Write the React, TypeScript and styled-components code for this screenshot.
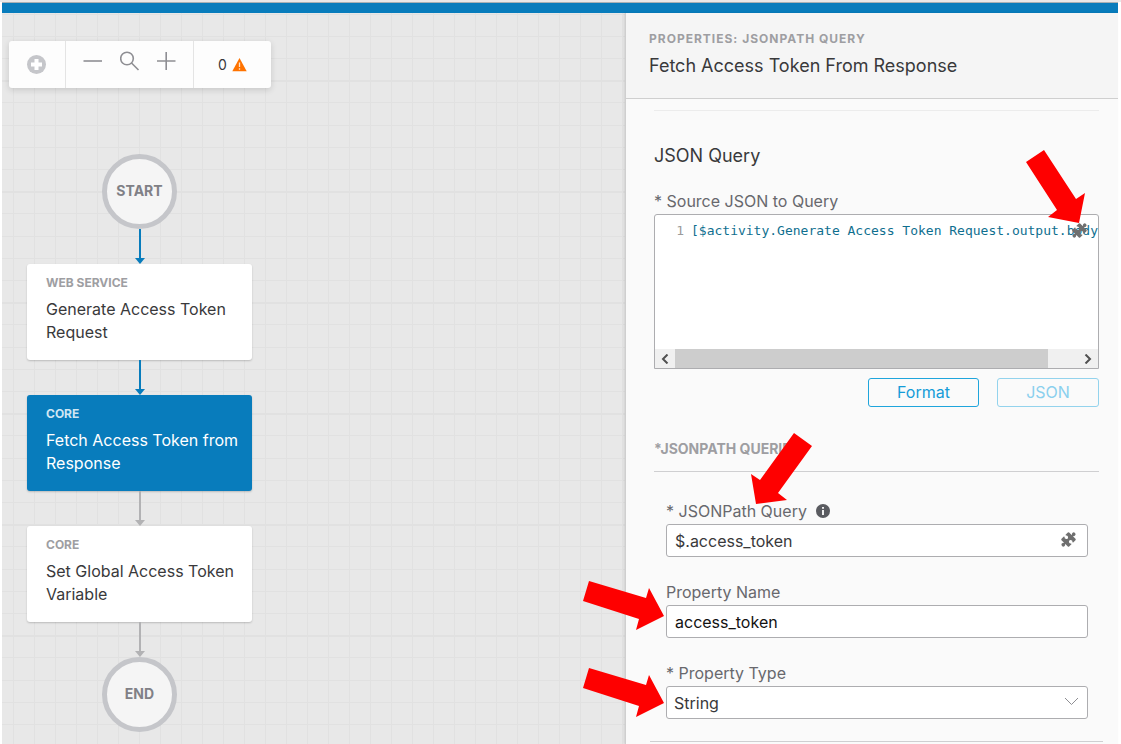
import React from "react";
import styled, { createGlobalStyle } from "styled-components";

const GlobalStyle = createGlobalStyle`
  *, *::before, *::after { box-sizing: border-box; }
  body {
    margin: 0;
    background: #fff;
    color: #39393b;
    font-family: Inter, "Liberation Sans", sans-serif;
    font-size: 15px;
  }
  button, input, select, textarea { font: inherit; }
`;

const Page = styled.div`
  display: flex;
  flex-direction: column;
  min-height: 100vh;
  border-top: 2px solid #e8e8e8;
`;

const Accent = styled.header`
  height: 11px;
  margin: 0 3px 0 2px;
  background: #087cbc;
  border-top: 1px solid #a8b0b4;
`;

const Workspace = styled.main`
  flex: 1;
  display: flex;
  margin: 0 3px 0 2px;
`;

const line = "#e1e1e1";

const Canvas = styled.section`
  flex: 1;
  min-width: 0;
  padding: 28px 7px 12px;
  background-color: #e8e8e8;
  background-image:
    linear-gradient(90deg, ${line} 1px, transparent 1px),
    linear-gradient(
      ${line} 1px, transparent 1px 22px,
      ${line} 22px 23px, transparent 23px 44px,
      ${line} 44px 46px, transparent 46px 66px,
      ${line} 66px 67px, transparent 67px 89px,
      ${line} 89px 90px, transparent 90px
    );
  background-size: 21px 111px;
  background-position: 11px 23px;
`;

const Toolbar = styled.div`
  display: inline-flex;
  height: 47px;
  background: #fdfdfd;
  border-radius: 3px;
  box-shadow: 0 2px 6px rgba(0, 0, 0, 0.14);
`;

const ToolGroup = styled.div<{ $width: number }>`
  display: flex;
  align-items: center;
  justify-content: center;
  gap: 17px;
  width: ${(p) => p.$width}px;
  & + & { border-left: 1px solid #e4e4e4; }
`;

const ToolButton = styled.button<{ $raised?: boolean }>`
  display: flex;
  padding: 0;
  margin-bottom: ${(p) => (p.$raised ? 8 : 0)}px;
  border: 0;
  background: none;
  color: #8e8e93;
`;

const Warnings = styled.button`
  display: flex;
  align-items: center;
  gap: 5px;
  padding: 0;
  border: 0;
  background: none;
  color: #39393b;
  font-size: 14px;
`;

const Flow = styled.div`
  display: flex;
  flex-direction: column;
  align-items: center;
  width: 225px;
  margin: 66px 0 0 18px;
`;

const Terminal = styled.div`
  display: flex;
  align-items: center;
  justify-content: center;
  width: 75px;
  height: 75px;
  padding-bottom: 3px;
  border: 5px solid #c5c6ca;
  border-radius: 50%;
  background: #f5f5f5;
  color: #808086;
  font-size: 14px;
  font-weight: 700;
`;

const Connector = styled.div<{ $active?: boolean }>`
  display: flex;
  flex-direction: column;
  align-items: center;
  height: 35px;
  color: ${(p) => (p.$active ? "#087cbc" : "#b2b2b4")};
  &::before {
    content: "";
    flex: 1;
    width: 2px;
    background: currentColor;
  }
  &::after {
    content: "";
    border: 5px solid transparent;
    border-top: 6px solid currentColor;
    border-bottom: 0;
  }
`;

const Activity = styled.article<{ $selected?: boolean }>`
  width: 100%;
  height: 96px;
  padding: 11px 10px 0 19px;
  border-radius: 3px;
  background: ${(p) => (p.$selected ? "#087cbc" : "#fff")};
  color: ${(p) => (p.$selected ? "#fff" : "#39393b")};
  box-shadow: 0 1px 2px rgba(0, 0, 0, 0.2);
`;

const ActivityKind = styled.div<{ $selected?: boolean }>`
  color: ${(p) => (p.$selected ? "#cfe6f3" : "#9e9ea2")};
  font-size: 12px;
  font-weight: 700;
  line-height: 16px;
`;

const ActivityName = styled.div`
  margin-top: 7px;
  font-size: 16px;
  line-height: 23px;
`;

const Panel = styled.aside`
  position: relative;
  width: 493px;
  border-left: 1px solid #cfcfcf;
  background: #fafafa;
  box-shadow: -1px 0 2px rgba(0, 0, 0, 0.1);
`;

const PanelHeader = styled.header`
  height: 86px;
  padding: 18px 23px 0;
  border-bottom: 1px solid #cfcfcf;
  background: #f5f5f5;
`;

const Eyebrow = styled.div`
  color: #9e9ea2;
  font-size: 12px;
  font-weight: 700;
  letter-spacing: 1px;
  line-height: 16px;
`;

const PanelTitle = styled.h1`
  margin: 7px 0 0;
  font-size: 18px;
  font-weight: 400;
  line-height: 24px;
`;

const PanelBody = styled.form`
  margin: 11px 19px 0 28px;
  border-top: 1px solid #ececec;
`;

const SectionTitle = styled.h2`
  margin: 33px 0 0;
  font-size: 18px;
  font-weight: 400;
  line-height: 24px;
`;

const Label = styled.label`
  color: #68686d;
  font-size: 16px;
  line-height: 24px;
`;

const EditorLabel = styled(Label)`
  display: block;
  margin-top: 21px;
`;

const Editor = styled.div`
  position: relative;
  margin-top: 1px;
  border: 1px solid #adadb0;
  border-radius: 3px 3px 0 0;
  background: #fff;
  overflow: hidden;
`;

const EditorLine = styled.div`
  display: flex;
  height: 134px;
  padding-top: 5px;
  font-family: "DejaVu Sans Mono", monospace;
  font-size: 13px;
  line-height: 22px;
`;

const Gutter = styled.span`
  width: 36px;
  padding-right: 7px;
  color: #9b9b9b;
  text-align: right;
`;

const CodeArea = styled.textarea`
  flex: 1;
  min-width: 0;
  padding: 0;
  border: 0;
  outline: 0;
  resize: none;
  overflow: hidden;
  white-space: pre;
  background: none;
  color: #0f6f8f;
`;

const ScrollTrack = styled.div`
  display: flex;
  align-items: center;
  height: 19px;
  background: #f0f0f0;
  color: #505050;
`;

const ScrollButton = styled.button`
  display: flex;
  align-items: center;
  justify-content: center;
  width: 20px;
  height: 19px;
  padding: 0;
  border: 0;
  background: none;
  color: inherit;
`;

const ScrollThumb = styled.div`
  width: 373px;
  height: 19px;
  margin-right: auto;
  background: #cdcdcd;
`;

const VariableButton = styled.button<{ $top: number; $right: number }>`
  position: absolute;
  top: ${(p) => p.$top}px;
  right: ${(p) => p.$right}px;
  display: flex;
  padding: 0;
  border: 0;
  background: none;
  color: #6f6f6f;
`;

const Actions = styled.div`
  display: flex;
  justify-content: flex-end;
  gap: 18px;
  margin-top: 9px;
`;

const ActionButton = styled.button<{ $width: number }>`
  width: ${(p) => p.$width}px;
  height: 29px;
  padding: 0 0 2px;
  border: 1px solid #1fa5dc;
  border-radius: 3px;
  background: none;
  color: #149cd8;
  font-size: 16px;
  &:disabled { border-color: #93d3ed; color: #8ad0ee; }
`;

const GroupTitle = styled.h3`
  margin: 30px 0 0;
  padding-bottom: 10px;
  border-bottom: 1px solid #cfcfd1;
  color: #9e9ea2;
  font-size: 14px;
  font-weight: 700;
  line-height: 24px;
`;

const Fields = styled.div`
  display: flex;
  flex-direction: column;
  gap: 23px;
  margin: 27px 11px 0 12px;
`;

const Field = styled.div`
  position: relative;
  display: flex;
  flex-direction: column;
`;

const LabelRow = styled.div`
  display: flex;
  align-items: center;
  gap: 9px;
  margin-bottom: 1px;
`;

const TextInput = styled.input<{ $strong?: boolean }>`
  height: 33px;
  padding: 0 8px;
  border: 1px solid #adadb0;
  border-radius: 3px;
  outline: 0;
  background: #fff;
  color: ${(p) => (p.$strong ? "#121212" : "#39393b")};
  font-size: 16px;
`;

const Select = styled.select`
  height: 33px;
  padding: 0 7px;
  border: 1px solid #adadb0;
  border-radius: 3px;
  appearance: none;
  background: #fff;
  color: #39393b;
  font-size: 16px;
`;

const Chevron = styled.svg`
  position: absolute;
  right: 9px;
  bottom: 13px;
  pointer-events: none;
`;

const Divider = styled.hr`
  margin: 22px -4px 0;
  border: 0;
  border-top: 1px solid #cfcfd1;
`;

const Callouts = styled.svg`
  position: absolute;
  top: 127px;
  left: -46px;
  pointer-events: none;
`;

const Puzzle = () => (
  <svg width="17" height="17" viewBox="1 1 22 22" fill="currentColor" aria-hidden="true">
    <g transform="rotate(45 12 12)">
      <path d="M6.200 5H17.800a1.200 1.200 0 0 1 1.200 1.200V10.400l-1 .5a2.300 2.300 0 1 0 0 2.200l1 .5V17.800a1.200 1.200 0 0 1-1.200 1.200H6.200A1.200 1.200 0 0 1 5 17.800V13.600l1-.5a2.300 2.300 0 1 0 0-2.200l-1-.5V6.200A1.200 1.200 0 0 1 6.200 5z" />
      <path d="M10.800 3h2.400v18h-2.400z" />
      <circle cx="12" cy="2.500" r="2.400" />
      <circle cx="12" cy="21.500" r="2.400" />
    </g>
  </svg>
);

const arrows = [
  "1044,150 1026,162 1057,210 1048,217 1079,223 1085,193 1076,199",
  "794,433 812,446 778,493 787,500 756,504 751,474 760,480",
  "589,581 583,601 639,619 636,630 664,616 649,588 646,598",
  "589,668 583,688 639,706 636,717 664,703 649,675 646,685",
];

export default function App() {
  return (
    <>
      <GlobalStyle />
      <Page>
        <Accent />
        <Workspace>
          <Canvas>
            <Toolbar>
              <ToolGroup $width={56}>
                <ToolButton aria-label="Add activity">
                  <svg width="20" height="20" viewBox="0 0 20 20">
                    <circle cx="9.500" cy="9.500" r="9.500" fill="#c5c6ca" />
                    <path d="M9.500 4v11M4 9.500h11" stroke="#fff" strokeWidth="4" />
                  </svg>
                </ToolButton>
              </ToolGroup>
              <ToolGroup $width={128}>
                <ToolButton $raised aria-label="Zoom out">
                  <svg width="20" height="20" viewBox="0 0 20 20" fill="none" stroke="currentColor" strokeWidth="1.600">
                    <path d="M.500 10h18.500" />
                  </svg>
                </ToolButton>
                <ToolButton $raised aria-label="Reset zoom">
                  <svg width="20" height="20" viewBox="0 0 20 20" fill="none" stroke="currentColor" strokeWidth="1.600">
                    <circle cx="7" cy="7.500" r="6.300" />
                    <path d="M11.500 12l7 7" />
                  </svg>
                </ToolButton>
                <ToolButton $raised aria-label="Zoom in">
                  <svg width="20" height="20" viewBox="0 0 20 20" fill="none" stroke="currentColor" strokeWidth="1.600">
                    <path d="M0 10h18.500M9.200 1v18" />
                  </svg>
                </ToolButton>
              </ToolGroup>
              <ToolGroup $width={78}>
                <Warnings>
                  0
                  <svg width="15" height="14" viewBox="0 0 15 14" aria-label="warnings">
                    <path d="M7.500 0 14.700 13.200H.300z" fill="#ff7300" />
                    <path d="M7.500 4.500v4.500M7.500 10.200v1.500" stroke="#ffe3cc" strokeWidth="1.300" />
                  </svg>
                </Warnings>
              </ToolGroup>
            </Toolbar>

            <Flow>
              <Terminal>START</Terminal>
              <Connector $active />
              <Activity>
                <ActivityKind>WEB SERVICE</ActivityKind>
                <ActivityName>Generate Access Token Request</ActivityName>
              </Activity>
              <Connector $active />
              <Activity $selected>
                <ActivityKind $selected>CORE</ActivityKind>
                <ActivityName>Fetch Access Token from Response</ActivityName>
              </Activity>
              <Connector />
              <Activity>
                <ActivityKind>CORE</ActivityKind>
                <ActivityName>Set Global Access Token Variable</ActivityName>
              </Activity>
              <Connector />
              <Terminal>END</Terminal>
            </Flow>
          </Canvas>

          <Panel>
            <PanelHeader>
              <Eyebrow>PROPERTIES: JSONPATH QUERY</Eyebrow>
              <PanelTitle>Fetch Access Token From Response</PanelTitle>
            </PanelHeader>
            <PanelBody onSubmit={(e) => e.preventDefault()}>
              <SectionTitle>JSON Query</SectionTitle>
              <EditorLabel htmlFor="source">* Source JSON to Query</EditorLabel>
              <Editor>
                <EditorLine>
                  <Gutter>1</Gutter>
                  <CodeArea
                    id="source"
                    wrap="off"
                    spellCheck={false}
                    defaultValue="[$activity.Generate Access Token Request.output.body"
                  />
                </EditorLine>
                <ScrollTrack>
                  <ScrollButton type="button" aria-label="Scroll left">
                    <svg width="8" height="10" viewBox="0 0 8 10" fill="none" stroke="currentColor" strokeWidth="2">
                      <path d="M6.500.500 2 5l4.500 4.500" />
                    </svg>
                  </ScrollButton>
                  <ScrollThumb />
                  <ScrollButton type="button" aria-label="Scroll right">
                    <svg width="8" height="10" viewBox="0 0 8 10" fill="none" stroke="currentColor" strokeWidth="2">
                      <path d="M1.500.500 6 5 1.500 9.500" />
                    </svg>
                  </ScrollButton>
                </ScrollTrack>
                <VariableButton type="button" $top={7} $right={10} aria-label="Insert variable in source">
                  <Puzzle />
                </VariableButton>
              </Editor>
              <Actions>
                <ActionButton type="button" $width={111}>Format</ActionButton>
                <ActionButton type="button" $width={102} disabled>JSON</ActionButton>
              </Actions>
              <GroupTitle>*JSONPATH QUERIES</GroupTitle>
              <Fields>
                <Field>
                  <LabelRow>
                    <Label htmlFor="query">* JSONPath Query</Label>
                    <svg width="14" height="14" viewBox="0 0 14 14" role="img" aria-label="Info">
                      <circle cx="7" cy="7" r="7" fill="#5a5b60" />
                      <path d="M7 3v1.800M7 6v5" stroke="#fff" strokeWidth="1.800" />
                    </svg>
                  </LabelRow>
                  <TextInput id="query" defaultValue="$.access_token" />
                  <VariableButton type="button" $top={32} $right={11} aria-label="Insert variable in query">
                    <Puzzle />
                  </VariableButton>
                </Field>
                <Field>
                  <LabelRow>
                    <Label htmlFor="name">Property Name</Label>
                  </LabelRow>
                  <TextInput id="name" $strong defaultValue="access_token" />
                </Field>
                <Field>
                  <LabelRow>
                    <Label htmlFor="type">* Property Type</Label>
                  </LabelRow>
                  <Select id="type" defaultValue="String">
                    <option>String</option>
                  </Select>
                  <Chevron width="15" height="9" viewBox="0 0 15 9" fill="none" stroke="#8e8e93">
                    <path d="M1 1l6.500 6.500L14 1" />
                  </Chevron>
                </Field>
              </Fields>
              <Divider />
            </PanelBody>
            <Callouts width="520" height="590" viewBox="580 140 520 590" fill="#fe0000" aria-hidden="true">
              {arrows.map((points) => (
                <polygon key={points} points={points} />
              ))}
            </Callouts>
          </Panel>
        </Workspace>
      </Page>
    </>
  );
}
